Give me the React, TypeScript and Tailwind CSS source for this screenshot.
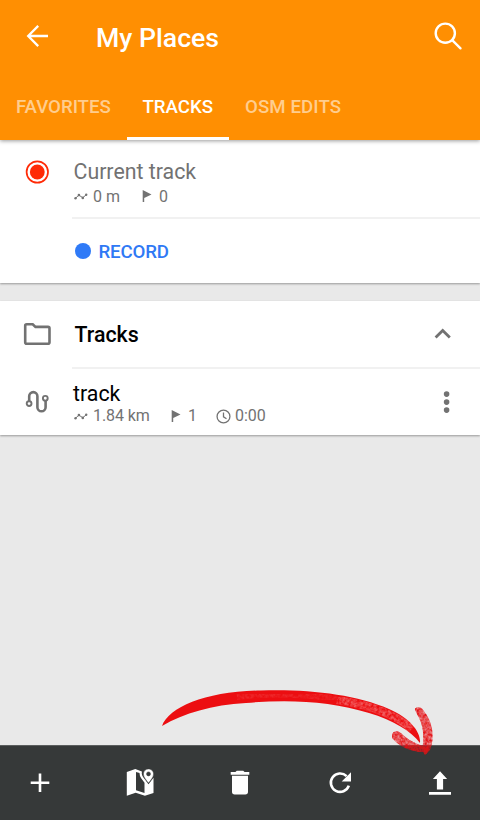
import React from "react";

function Distance() {
  return (
    <svg width="14" height="10" viewBox="0 0 14 10" className="shrink-0" fill="#727272" stroke="#727272">
      <path d="M1.5 6.3 4.8 3.1 8.8 5.7 12.2 2.8" fill="none" strokeWidth="1" />
      <g stroke="none">
        <circle cx="1.5" cy="6.3" r="1.2" />
        <circle cx="4.9" cy="3.1" r="1.3" />
        <circle cx="8.8" cy="5.9" r="1.3" />
        <circle cx="12.2" cy="2.7" r="1.2" />
      </g>
    </svg>
  );
}

function Flag() {
  return (
    <svg width="10" height="12" viewBox="0 0 10 12" className="shrink-0">
      <path d="M.7 0 9.5 4.5 2.2 8V12H.7Z" fill="#727272" />
    </svg>
  );
}

export default function App() {
  return (
    <div className="relative flex h-[820px] w-[480px] flex-col overflow-hidden bg-[#e9e9e9] font-['Roboto',sans-serif]">
      <header className="z-10 h-[140px] shrink-0 bg-[#ff8f02] text-white shadow-[0_1px_4px_rgba(0,0,0,0.4)]">
        <div className="flex h-[74px] items-center pl-[26px] pr-[17px]">
          <svg width="24" height="24" viewBox="0 0 24 24" fill="none" stroke="white" strokeWidth="2.3">
            <path d="M22 11H3M12.2 .9 2.2 11l10 10.1" />
          </svg>
          <h1 className="ml-[46px] grow whitespace-nowrap pt-[2px] text-[26.67px] font-medium leading-[32px]">My Places</h1>
          <svg width="30" height="30" viewBox="0 0 30 30" fill="none" stroke="white" strokeWidth="2.4">
            <circle cx="12.3" cy="11.2" r="9.6" />
            <path d="m19.2 18.2 8.3 8.1" strokeWidth="2.4" strokeLinecap="round" />
          </svg>
        </div>
        <nav className="flex h-[66px] text-[18.67px] font-medium leading-[66px] text-[#ffcd8e]">
          <div className="w-[127px] pl-[16px] tracking-[-0.03px]">FAVORITES</div>
          <div className="w-[102px] border-b-[3px] border-white pl-[15.5px] tracking-[-0.03px] text-white">TRACKS</div>
          <div className="whitespace-nowrap pl-[16px] tracking-[0.08px]">OSM EDITS</div>
        </nav>
      </header>

      <section className="h-[143px] shrink-0 bg-white shadow-[0_1px_2px_rgba(0,0,0,0.35)]">
        <div className="flex h-[77px]">
          <svg width="24" height="24" viewBox="0 0 24 24" className="ml-[25px] mt-[20px] shrink-0">
            <circle cx="12.3" cy="12" r="10.7" fill="none" stroke="#ff2a06" strokeWidth="1.7" />
            <circle cx="12.3" cy="12" r="7.4" fill="#ff2a06" />
          </svg>
          <div className="ml-[24px] pt-[19px] text-[#727272]">
            <div className="pl-[0.5px] text-[21.33px] leading-[26px]">Current track</div>
            <div className="flex h-[24px] items-center text-[16px] leading-[24px]">
              <span className="ml-[1px] flex"><Distance /></span>
              <span className="ml-[5px] w-[49px]">0 m</span>
              <span className="mb-[2px]"><Flag /></span>
              <span className="ml-[7px]">0</span>
            </div>
          </div>
        </div>
        <div className="ml-[72px] h-[2px] bg-[#f1f1f1]" />
        <div className="flex h-[64px] items-center pl-[75px] text-[#2f79f5]">
          <div className="h-4 w-4 rounded-full bg-[#2f7af7]" />
          <span className="ml-[7.5px] mt-[2px] text-[18.67px] font-medium tracking-[-0.15px]">RECORD</span>
        </div>
      </section>

      <section className="mt-[18px] h-[134px] shrink-0 bg-white shadow-[0_1px_2px_rgba(0,0,0,0.35)]">
        <div className="flex h-[66px] items-center pl-[23px]">
          <svg width="28" height="24" viewBox="0 0 28 24" fill="none" stroke="#727272" strokeWidth="2.6">
            <path d="M3.7 2.2h6l2.8 2.7h12.5q1.5 0 1.5 1.5v13.9q0 1.5-1.5 1.5H3.7q-1.5 0-1.5-1.5V3.7q0-1.5 1.5-1.5Z" />
          </svg>
          <h2 className="ml-[23.5px] mt-[1px] w-[359.5px] text-[21.33px] font-medium text-black">Tracks</h2>
          <svg width="18" height="12" viewBox="0 0 18 12" className="shrink-0" fill="none" stroke="#727272" strokeWidth="2.8">
            <path d="m1.6 9.4 7.1-7 7.1 7" />
          </svg>
        </div>
        <div className="ml-[72px] h-[2px] bg-[#f1f1f1]" />
        <div className="flex h-[66px]">
          <svg width="24" height="24" viewBox="0 0 24 24" className="ml-[25px] mt-[21px] shrink-0" fill="none" stroke="#727272">
            <path d="M4.2 11.8V6.2a4.1 4.1 0 0 1 8.2 0v11a4.1 4.1 0 0 0 8.2 0v-6.4" strokeWidth="2.6" />
            <circle cx="4.1" cy="13.6" r="2.4" fill="white" strokeWidth="1.9" />
            <circle cx="20.3" cy="8.3" r="2.4" fill="white" strokeWidth="1.9" />
          </svg>
          <div className="ml-[24px] w-[369px] pt-[12px]">
            <div className="text-[21.33px] leading-[26px] text-black">track</div>
            <div className="flex h-[18px] items-center text-[16px] leading-[18px] text-[#727272]">
              <span className="ml-[1px] mt-[1px] flex"><Distance /></span>
              <span className="ml-[5px] w-[78px] tracking-[-0.1px]">1.84 km</span>
              <Flag />
              <span className="ml-[7px] w-[28px]">1</span>
              <svg width="15" height="15" viewBox="0 0 14 14" fill="none" stroke="#727272" strokeWidth="1.2">
                <circle cx="7" cy="7" r="6" />
                <path d="M7 3.2v4.1l2.8 1.8" />
              </svg>
              <span className="ml-[4px]">0:00</span>
            </div>
          </div>
          <svg width="8" height="24" viewBox="0 0 8 24" className="mt-[21px]" fill="#727272">
            <circle cx="4.6" cy="4.1" r="2.8" />
            <circle cx="4.6" cy="12.1" r="2.8" />
            <circle cx="4.6" cy="20.1" r="2.8" />
          </svg>
        </div>
      </section>

      <footer className="mt-auto grid h-[75px] shrink-0 grid-cols-[80px_120px_80px_120px_80px] items-center justify-items-center border-t border-[#5b5e5e] bg-[#363939]">
        <svg width="32" height="32" viewBox="0 0 32 32" stroke="white" strokeWidth="2.6">
          <path d="M6.7 15.7h18.6M16 6.4v18.6" />
        </svg>
        <svg width="32" height="32" viewBox="0 0 32 32" fill="white">
          <path fillRule="evenodd" d="m2.8 4.9 8.5-2.9 6.6 2.4c-.5 2.8.4 4.4 1.5 6l5.1 6.8 5-6.5v15.2l-8.6 2.9-9.2-3.1-8.9 3.1Zm9.2.2v18.2l8.5 2.6v-10.2l-3.5-4.8a9 9 0 0 1-1.5-4.8Z" />
          <path fillRule="evenodd" d="M24.5 1.9c2.9 0 5.1 2.2 5.1 5 0 3.2-3.1 6.6-5.1 9.2-2-2.6-5.1-6-5.1-9.2a5.1 5.1 0 0 1 5.1-5m0 3a2 2 0 1 0 0 4 2 2 0 0 0 0-4" stroke="#363939" strokeWidth=".5" />
        </svg>
        <svg width="32" height="32" viewBox="0 0 32 32" fill="white">
          <path d="M6.7 4.9h4.7l1.4-1.2h6.4l1.4 1.2h4.7v2.8H6.7ZM8 8.8h16v16a2.7 2.7 0 0 1-2.7 2.7H10.7A2.7 2.7 0 0 1 8 24.8Z" />
        </svg>
        <svg width="32" height="32" viewBox="0 0 32 32">
          <path d="M24.8 18.6a9.2 9.2 0 1 1-2.2-9.4" fill="none" stroke="white" strokeWidth="2.6" />
          <path d="M27 5.2v9.3h-9.3Z" fill="white" />
        </svg>
        <svg width="32" height="32" viewBox="0 0 32 32" fill="white">
          <path d="m16 4.2 7.1 7.9h-4v10.3h-6.2V12.1h-4ZM5 25h22v2.8H5Z" />
        </svg>
      </footer>

      <svg width="320" height="90" viewBox="150 680 320 90" className="pointer-events-none absolute left-[150px] top-[680px] z-20">
        <defs>
          <filter id="brush" x="-10%" y="-10%" width="120%" height="120%">
            <feTurbulence type="fractalNoise" baseFrequency=".35" numOctaves="2" seed="7" result="grain" />
            <feColorMatrix in="grain" type="matrix" values="0 0 0 0 0 0 0 0 0 0 0 0 0 0 0 2 0 0 0 -.5" result="mask" />
            <feComposite in="SourceGraphic" in2="mask" operator="in" result="rough" />
            <feGaussianBlur in="rough" stdDeviation=".5" />
          </filter>
        </defs>
        <path d="M162 726C169 707 207 691 261 690.5C307 689 355 694 389 709C410 718 421 732 420 743C411 731 393 720 369 713C331 701 288 699 246 703C212 705 184 713 162 726Z" fill="#ec0e11" />
        <path d="M337 700C372 705 396 715 412 729" fill="none" stroke="#fff" strokeOpacity=".32" strokeWidth="8" filter="url(#brush)" />
        <path d="M237 697C270 693 305 694 337 699" fill="none" stroke="#fff" strokeOpacity=".1" strokeWidth="6" filter="url(#brush)" />
        <g fill="#ef1116" fillOpacity=".45">
          <path d="M415 710C414 707 421 706 423 710C433 721 435 738 430 750L425 755L422 750C425 736 423 724 417 714Z" />
          <path d="M392 735C393 730 399 730 403 735C411 742 420 746 430 747L427 752C412 753 400 747 392 738Z" />
        </g>
        <g fill="#e30f14" filter="url(#brush)">
          <path d="M415 710C414 707 421 706 423 710C433 721 435 738 430 750L425 755L422 750C425 736 423 724 417 714Z" />
          <path d="M392 735C393 730 399 730 403 735C411 742 420 746 430 747L427 752C412 753 400 747 392 738Z" />
        </g>
      </svg>
    </div>
  );
}
